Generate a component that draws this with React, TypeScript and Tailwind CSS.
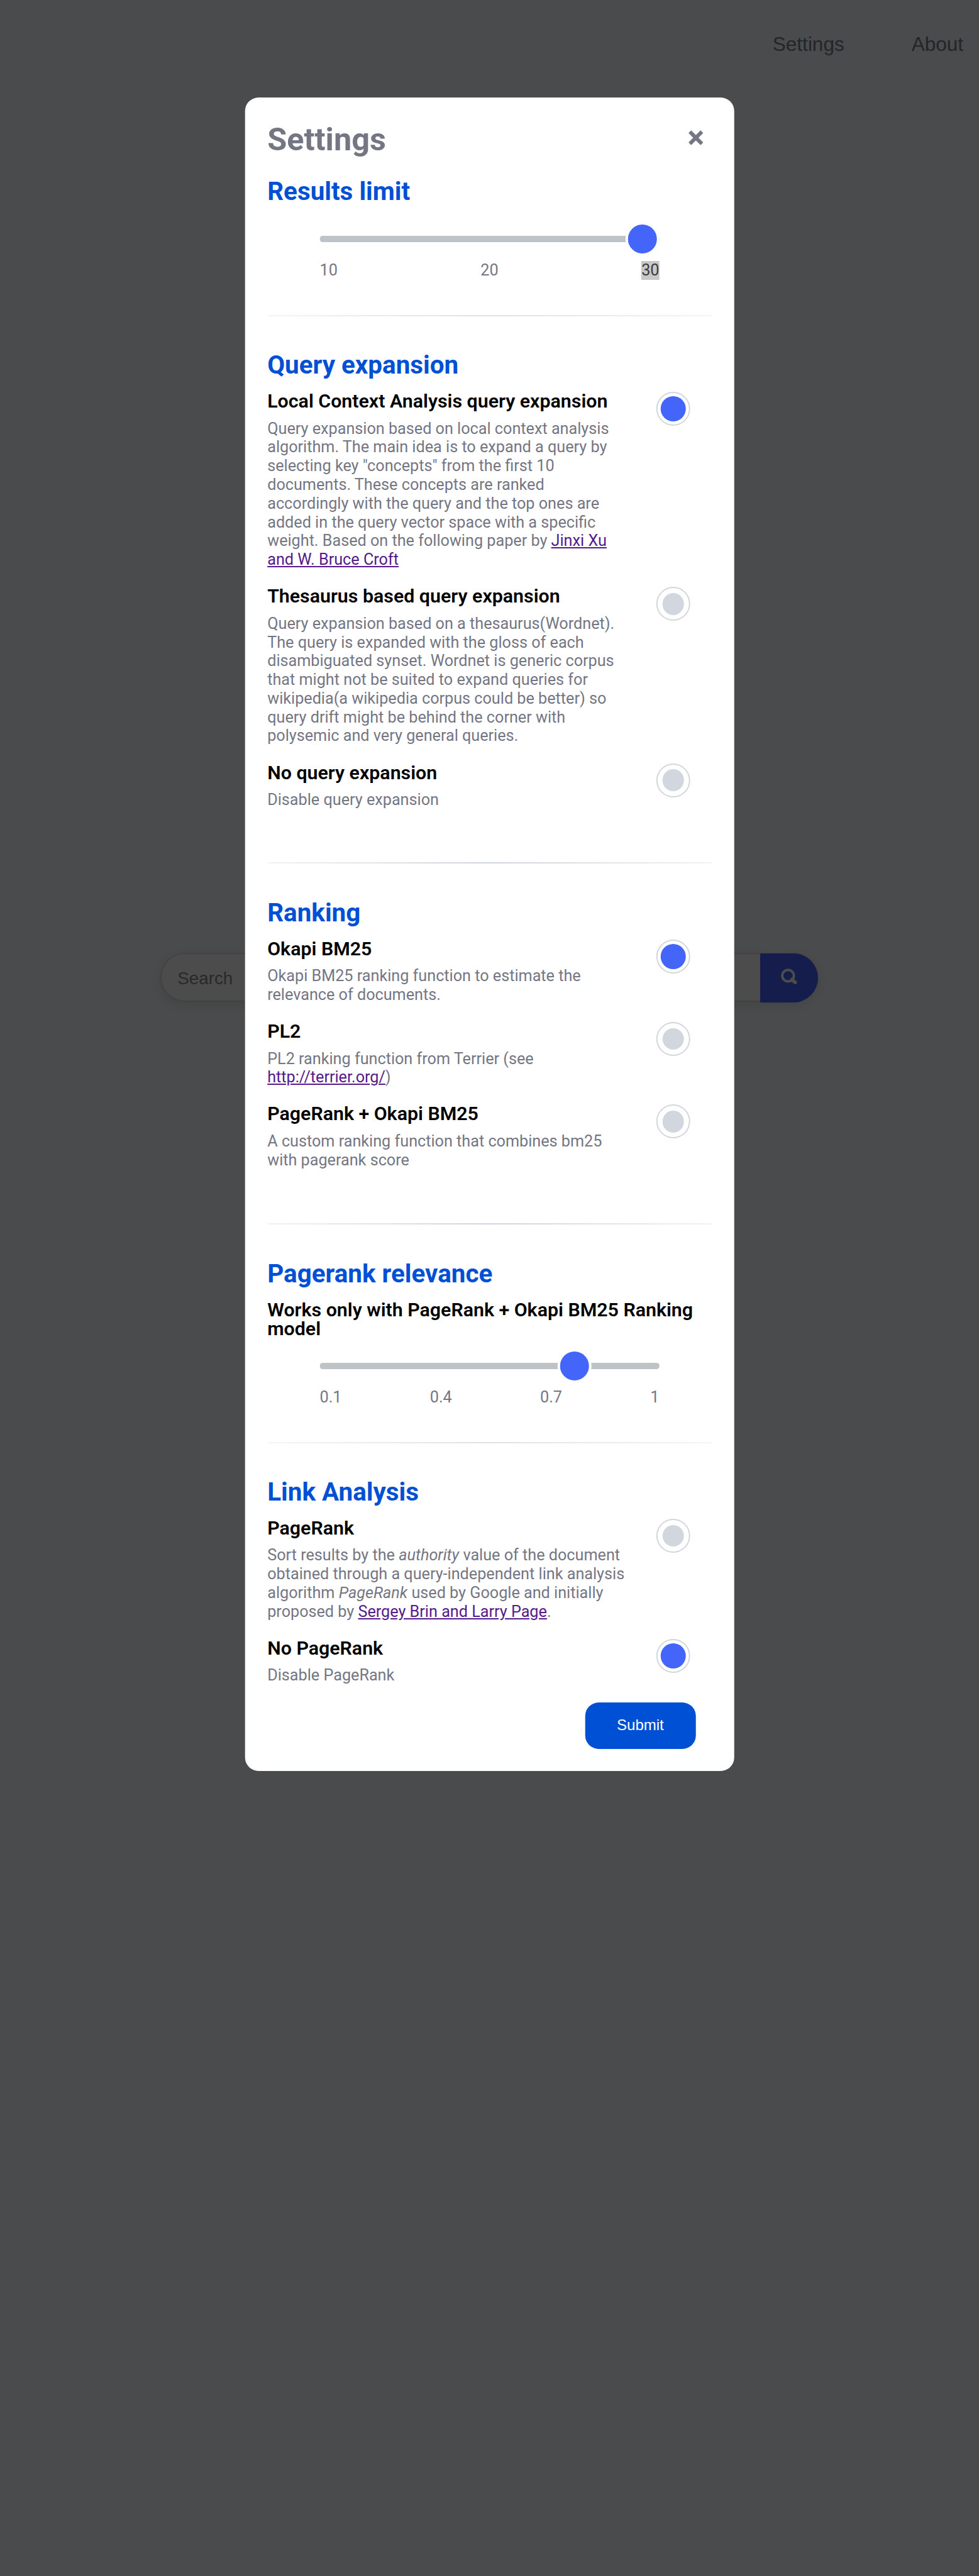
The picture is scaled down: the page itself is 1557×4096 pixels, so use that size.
import React from "react";

function Radio({ checked }: { checked?: boolean }) {
  return (
    <button
      role="radio"
      aria-checked={!!checked}
      className="mr-[34.3px] flex h-[54px] w-[54px] shrink-0 items-center justify-center rounded-full border-2 border-[#d2d6de] bg-white"
    >
      {checked ? (
        <span className="h-10 w-10 rounded-full bg-[#4465fa]" />
      ) : (
        <span className="h-[34.6px] w-[34.6px] rounded-full bg-[#d2d6de]" />
      )}
    </button>
  );
}

function Option({ title, checked, lines }: { title: string; checked?: boolean; lines: React.ReactNode[] }) {
  return (
    <div className="flex items-start justify-between">
      <div className="whitespace-nowrap">
        <h3 className="text-[30.35px] leading-[30.2px] font-semibold text-black">{title}</h3>
        <p className="mt-[13.2px] text-[25.2px] leading-[29.8px] text-[#757683]">
          {lines.map((line, i) => (
            <span key={i} className="block">
              {line}
            </span>
          ))}
        </p>
      </div>
      <Radio checked={checked} />
    </div>
  );
}

function Heading({ children }: { children: React.ReactNode }) {
  return <h2 className="text-[40.4px] leading-[50px] font-bold text-[#0050d5]">{children}</h2>;
}

function Divider({ strong }: { strong?: boolean }) {
  return strong ? (
    <hr className="h-[2.4px] border-0 bg-linear-to-r from-[#f2f2f2] via-[#d0d6de] to-[#f2f2f2]" />
  ) : (
    <hr className="h-0.5 border-0 bg-linear-to-r from-[#f5f5f5] via-[#e0e0ea] to-[#f5f5f5]" />
  );
}

function Slider({ value, children }: { value: number; children: React.ReactNode }) {
  return (
    <div className="mx-auto w-[540px]">
      <div className="relative flex h-[54px] items-center">
        <div className="h-[9.6px] w-full rounded-[4.5px] bg-[#bdc3c7]" />
        <span
          className="absolute top-0 h-[54px] w-[54px] rounded-full border-4 border-white bg-[#4465fa]"
          style={{ left: `${value * 486}px` }}
        />
      </div>
      <div className="mt-2 flex justify-between text-[25.2px] leading-[30px] text-[#757683]">{children}</div>
    </div>
  );
}

function Link({ children }: { children: React.ReactNode }) {
  return (
    <a href="#" className="text-[#551a8b] underline">
      {children}
    </a>
  );
}

export default function App() {
  return (
    <div className="relative h-[4096px] w-full overflow-hidden bg-[#4a4b4c] font-['Liberation_Sans',sans-serif]">
      <nav className="flex justify-end gap-[107px] pt-[52px] pr-[25px] text-[31.5px] leading-[37px] text-[#242527]">
        <a href="#">Settings</a>
        <a href="#">About</a>
      </nav>

      <div className="mt-[1426px] ml-[255.3px] flex h-[78px] w-[1045.8px] items-start justify-between rounded-full border-2 border-r-0 border-[#434343] bg-[#4c4c4c] shadow-[0_5px_16px_rgba(0,0,0,0.1)]">
        <span className="pt-[23px] pl-[25px] text-[27.75px] leading-8 text-[#292929]">Search</span>
        <button className="-mt-px flex h-[78.4px] w-[92.5px] items-start justify-start rounded-r-full bg-[#141d4b] pt-[24px] pl-[33px]">
          <svg viewBox="0 0 86 84" className="h-[25.5px] w-[26px]" fill="none" stroke="#4c4c4c">
            <circle cx="37.5" cy="37.5" r="30.5" strokeWidth="13" />
            <path d="M58 58L75 73" strokeWidth="19" strokeLinecap="round" />
          </svg>
        </button>
      </div>

      <div
        role="dialog"
        className="absolute top-[155.2px] left-1/2 h-[2660.8px] w-[778.6px] -translate-x-1/2 rounded-[21.6px] bg-white px-9 pt-[36.4px] font-['Roboto',sans-serif]"
      >
        <div className="flex h-[60px] items-start justify-between">
          <h1 className="text-[50.4px] leading-[60px] font-bold text-[#757683]">Settings</h1>
          <button aria-label="Close" className="mt-[15.8px] mr-[13.3px]">
            <svg viewBox="0 0 24 24" className="h-6 w-6" stroke="#757683" strokeWidth="6">
              <path d="M2.4 2.4L21.6 21.6M21.6 2.4L2.4 21.6" />
            </svg>
          </button>
        </div>

        <section className="mt-[28.3px]">
          <Heading>Results limit</Heading>
          <div className="mt-[22.9px] mb-[55.8px]">
            <Slider value={1}>
              <span>10</span>
              <span>20</span>
              <span className="bg-[#c8c8c8] text-[#3a3a3a]">30</span>
            </Slider>
          </div>
          <Divider />
        </section>

        <section className="mt-[53.7px]">
          <Heading>Query expansion</Heading>
          <div className="mt-[17px] mb-[84px] flex flex-col gap-[28.3px]">
            <Option
              title="Local Context Analysis query expansion"
              checked
              lines={[
                "Query expansion based on local context analysis",
                "algorithm. The main idea is to expand a query by",
                'selecting key "concepts" from the first 10',
                "documents. These concepts are ranked",
                "accordingly with the query and the top ones are",
                "added in the query vector space with a specific",
                <>
                  weight. Based on the following paper by <Link>Jinxi Xu</Link>
                </>,
                <Link>and W. Bruce Croft</Link>,
              ]}
            />
            <Option
              title="Thesaurus based query expansion"
              lines={[
                "Query expansion based on a thesaurus(Wordnet).",
                "The query is expanded with the gloss of each",
                "disambiguated synset. Wordnet is generic corpus",
                "that might not be suited to expand queries for",
                "wikipedia(a wikipedia corpus could be better) so",
                "query drift might be behind the corner with",
                "polysemic and very general queries.",
              ]}
            />
            <Option title="No query expansion" lines={["Disable query expansion"]} />
          </div>
          <Divider strong />
        </section>

        <section className="mt-[53.5px]">
          <Heading>Ranking</Heading>
          <div className="mt-[17.2px] mb-[85.4px] flex flex-col gap-[28.3px]">
            <Option
              title="Okapi BM25"
              checked
              lines={["Okapi BM25 ranking function to estimate the", "relevance of documents."]}
            />
            <Option
              title="PL2"
              lines={["PL2 ranking function from Terrier (see", <><Link>http://terrier.org/</Link>)</>]}
            />
            <Option
              title="PageRank + Okapi BM25"
              lines={["A custom ranking function that combines bm25", "with pagerank score"]}
            />
          </div>
          <Divider strong />
        </section>

        <section className="mt-[53.5px]">
          <Heading>Pagerank relevance</Heading>
          <h3 className="mt-[17px] text-[30.35px] leading-[30.2px] font-semibold whitespace-nowrap text-black">
            Works only with PageRank + Okapi BM25 Ranking
            <br />
            model
          </h3>
          <div className="mt-[16.8px] mb-[55.8px]">
            <Slider value={0.7778}>
              <span>0.1</span>
              <span>0.4</span>
              <span>0.7</span>
              <span>1</span>
            </Slider>
          </div>
          <Divider />
        </section>

        <section className="mt-[53px]">
          <Heading>Link Analysis</Heading>
          <div className="mt-[17.3px] flex flex-col gap-[28.3px]">
            <Option
              title="PageRank"
              lines={[
                <>
                  Sort results by the <em>authority</em> value of the document
                </>,
                "obtained through a query-independent link analysis",
                <>
                  algorithm <em>PageRank</em> used by Google and initially
                </>,
                <>
                  proposed by <Link>Sergey Brin and Larry Page</Link>.
                </>,
              ]}
            />
            <Option title="No PageRank" checked lines={["Disable PageRank"]} />
          </div>
        </section>

        <div className="mt-[27.6px] flex justify-end pr-[25.3px]">
          <button className="h-[74px] w-[176.2px] rounded-[21.6px] bg-[#0050d5] pb-0.5 font-['Liberation_Sans',sans-serif] text-2xl text-white">
            Submit
          </button>
        </div>
      </div>
    </div>
  );
}
